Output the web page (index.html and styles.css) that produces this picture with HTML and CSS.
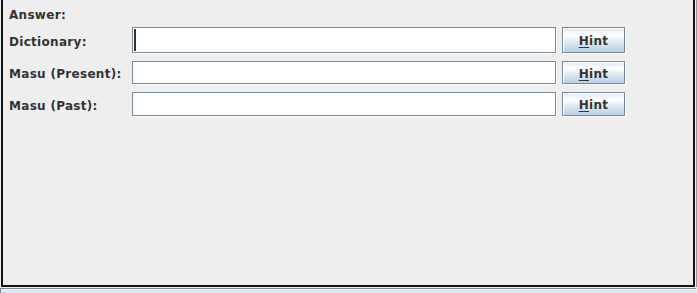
FILE: index.html
```html
<!DOCTYPE html>
<html>
<head>
<meta charset="utf-8">
<link rel="stylesheet" href="styles.css">
</head>
<body>
<div class="frame">
  <div class="panel">
    <div class="answer">Answer:</div>
    <div class="row row-tall">
      <div class="label">Dictionary:</div>
      <div class="field focused"></div>
      <div class="btn"><u>H</u>int</div>
    </div>
    <div class="row row-mid">
      <div class="label">Masu (Present):</div>
      <div class="field"></div>
      <div class="btn"><u>H</u>int</div>
    </div>
    <div class="row row-low">
      <div class="label">Masu (Past):</div>
      <div class="field"></div>
      <div class="btn"><u>H</u>int</div>
    </div>
  </div>
  <div class="strip"></div>
</div>
</body>
</html>
```

FILE: styles.css
```css
html, body {
  margin: 0;
  padding: 0;
  background: #eeeeee;
  overflow: hidden;
}
body {
  font-family: "DejaVu Sans", sans-serif;
  font-weight: bold;
  font-size: 12px;
  color: #333333;
  width: 697px;
  height: 293px;
}
.frame {
  padding-left: 1px;
}
.panel {
  box-sizing: border-box;
  width: 694px;
  height: 287px;
  border: 2px solid #141414;
  border-top: none;
  box-shadow: 1px 0 0 #eeeeee, 2px 0 0 #8c97a3;
  padding: 8px 0 0 6px;
  display: flex;
  flex-direction: column;
}
.answer {
  line-height: 14px;
  height: 14px;
  margin-bottom: 5px;
  letter-spacing: 0.3px;
}
.row {
  display: flex;
  align-items: center;
  line-height: 14px;
}
.row + .row {
  margin-top: 7px;
}
.row-tall { height: 27px; }
.row-mid { height: 24px; }
.row-low { height: 25px; }
.label {
  width: 123px;
  flex: none;
  padding-top: 2px;
  letter-spacing: 0.3px;
}
.field {
  position: relative;
  box-sizing: border-box;
  width: 424px;
  align-self: stretch;
  margin-bottom: 1px;
  background: #ffffff;
  border: 1px solid #7a8a99;
  box-shadow: 1px 1px 0 #ffffff;
  flex: none;
}
.focused::before {
  content: "";
  position: absolute;
  left: 1px;
  top: 1px;
  bottom: 1px;
  width: 2px;
  background: #333333;
}
.btn {
  box-sizing: border-box;
  margin-left: 6px;
  width: 63px;
  align-self: stretch;
  margin-bottom: 1px;
  padding-top: 2px;
  border: 1px solid #7a8a99;
  box-shadow: 1px 1px 0 #ffffff, inset 1px 1px 0 #ffffff;
  background: linear-gradient(to bottom, #dde8f3 0%, #ffffff 30%, #dde8f3 60%, #b8cfe5 100%);
  display: flex;
  align-items: center;
  justify-content: center;
  flex: none;
  letter-spacing: 0.3px;
}
.btn u {
  text-decoration-thickness: 1px;
  text-underline-offset: 2px;
}
.strip {
  box-sizing: border-box;
  width: 696px;
  height: 6px;
  margin-top: 1px;
  margin-left: -1px;
  border-top: 1px solid #7a8a99;
  border-left: 1px solid #7a8a99;
  box-shadow: inset 0 1px 0 #ffffff;
  background: #dde8f3;
}
```
